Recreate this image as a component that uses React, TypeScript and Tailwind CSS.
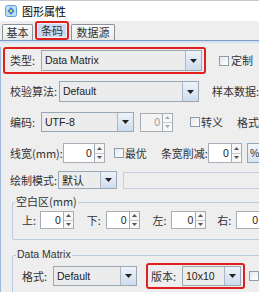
import React from "react";

const CJK = "font-['Noto_Sans_CJK_SC','Noto_Sans',sans-serif]";

function Arrow() {
  return (
    <div className="flex h-full w-[16px] items-center justify-center border-l border-[#a9b8c8] bg-gradient-to-b from-[#eef3f9] to-[#cddcec]">
      <svg width="7" height="4" viewBox="0 0 7 4">
        <path d="M0 0h7L3.5 4z" fill="#222" />
      </svg>
    </div>
  );
}

function Combo({ w, h = 20, text, latin = true }: { w: number; h?: number; text: string; latin?: boolean }) {
  return (
    <div
      className="flex shrink-0 items-stretch border border-[#9aa7b5] bg-[#ececec]"
      style={{ width: w, height: h }}
    >
      <div
        className={`flex flex-1 items-center pl-[3px] text-[#222] ${latin ? "font-['Liberation_Sans',sans-serif] text-[10.5px]" : CJK + " text-[11px]"}`}
      >
        {text}
      </div>
      <Arrow />
    </div>
  );
}

function Spinner({ fw, h = 18, disabled = false, value = "0" }: { fw: number; h?: number; disabled?: boolean; value?: string }) {
  return (
    <div className="flex shrink-0 items-stretch" style={{ height: h }}>
      <div
        className={`flex items-center justify-end border border-[#a5adb6] pr-[2px] font-['Liberation_Sans',sans-serif] text-[10.5px] ${disabled ? "bg-[#f3f3f3] text-[#9a9a9a]" : "bg-white text-[#222]"}`}
        style={{ width: fw }}
      >
        {value}
      </div>
      <div className="flex w-[10px] flex-col border border-l-0 border-[#a5adb6] bg-[#f7f7f7]">
        <div className="flex flex-1 items-center justify-center border-b border-[#c4c9cf]">
          <svg width="5" height="3" viewBox="0 0 5 3">
            <path d="M2.5 0L5 3H0z" fill={disabled ? "#aaa" : "#555"} />
          </svg>
        </div>
        <div className="flex flex-1 items-center justify-center">
          <svg width="5" height="3" viewBox="0 0 5 3">
            <path d="M0 0h5L2.5 3z" fill={disabled ? "#aaa" : "#555"} />
          </svg>
        </div>
      </div>
    </div>
  );
}

function Check() {
  return <div className="h-[10px] w-[10px] shrink-0 border border-[#8e9caa] bg-gradient-to-br from-[#e4e9ee] to-white" />;
}

export default function App() {
  return (
    <div className={`h-[292px] w-[259px] overflow-hidden whitespace-nowrap bg-[#eeeeee] text-[11px] leading-none text-[#333] ${CJK}`}>
      {/* title bar */}
      <div className="flex h-[21px] items-center gap-[5px] border-t border-[#c8c8c8] bg-white pl-[5px] text-[11px] text-black">
        <svg width="12" height="12" viewBox="0 0 12 12">
          <rect x="0.5" y="0.5" width="11" height="11" rx="2" fill="#bfe0f7" stroke="#5b9bd5" />
          <path d="M6 2l3.5 4L6 10 2.5 6z" fill="#2f7fd1" />
          <circle cx="6" cy="6" r="1.4" fill="#f5d142" />
        </svg>
        <span>图形属性</span>
      </div>

      {/* tabs */}
      <div className="flex h-[19px] items-end bg-[#eeeeee] pl-[2px]">
        <div className="flex h-[16px] w-[31px] items-center justify-center rounded-t-[2px] border border-b-0 border-[#8d9199] bg-gradient-to-b from-[#fbfbfb] to-[#e9e9e9]">
          基本
        </div>
        <div className="ml-[2px] flex h-[19px] w-[34px] items-center justify-center rounded-[3px] border-2 border-[#e21f1f] p-[1px]">
          <div className="flex h-full w-full items-center justify-center bg-[#c7dcf2]">条码</div>
        </div>
        <div className="ml-[2px] flex h-[16px] w-[44px] items-center justify-center rounded-t-[2px] border border-b-0 border-[#8d9199] bg-gradient-to-b from-[#fbfbfb] to-[#e9e9e9]">
          数据源
        </div>
      </div>
      <div className="h-[1px] bg-[#7b9cc6]" />
      <div className="h-[2px] bg-[#d3e1f1]" />

      {/* content */}
      <div className="h-[250px] border-l border-[#9db8d9]">
        {/* row 1 */}
        <div className="mt-[4px] flex h-[27px] items-center">
          <div className="ml-[2px] flex h-[27px] w-[203px] items-center rounded-[3px] border-2 border-[#e21f1f] pl-[5px]">
            <span className="w-[31px]">类型:</span>
            <Combo w={161} h={21} text="Data Matrix" />
          </div>
          <div className="ml-[13px]">
            <Check />
          </div>
          <span className="ml-[2px]">定制</span>
        </div>

        {/* row 2 */}
        <div className="mt-[7px] flex h-[21px] items-center pl-[9px]">
          <span className="w-[51px]">校验算法:</span>
          <Combo w={140} h={21} text="Default" />
          <span className="ml-[13px]">样本数据:</span>
        </div>

        {/* row 3 */}
        <div className="mt-[10px] flex h-[20px] items-center pl-[9px]">
          <span className="w-[32px]">编码:</span>
          <Combo w={93} h={20} text="UTF-8" />
          <div className="ml-[6px]">
            <Spinner fw={23} h={19} disabled />
          </div>
          <div className="ml-[17px]">
            <Check />
          </div>
          <span className="ml-[1px]">转义</span>
          <span className="ml-[14px]">格式</span>
        </div>

        {/* row 4 */}
        <div className="mt-[11px] flex h-[20px] items-center pl-[9px]">
          <span className="w-[53px]">线宽(mm):</span>
          <Spinner fw={32} h={20} />
          <div className="ml-[9px]">
            <Check />
          </div>
          <span className="ml-[1px]">最优</span>
          <span className="ml-[14px] w-[50px]">条宽削减:</span>
          <Spinner fw={24} h={20} />
          <div className="ml-[5px] flex h-[20px] w-[20px] shrink-0 items-center border border-[#8fa6bf] bg-gradient-to-b from-[#f2f6fb] to-[#d6e3f0] pl-[2px] font-['Liberation_Sans',sans-serif] text-[10.5px]">
            %
          </div>
        </div>

        {/* row 5 */}
        <div className="mt-[8px] flex h-[18px] items-center pl-[9px]">
          <span className="w-[48px] shrink-0">绘制模式:</span>
          <Combo w={59} h={18} text="默认" latin={false} />
          <div className="ml-[6px] h-[17px] w-[150px] shrink-0 border border-[#c5d0dc] bg-[#eeeeee]" />
        </div>

        {/* blank area group */}
        <div className="relative ml-[11px] mt-[13px] h-[38px] w-[260px] rounded-[2px] border border-[#b9cbe0]">
          <span className="absolute left-[2px] top-[-7px] bg-[#eeeeee] px-[1px]">空白区(mm)</span>
          <div className="mt-[8px] flex h-[18px] items-center pl-[9px]">
            <span className="w-[21px]">上:</span>
            <Spinner fw={24} />
            <span className="ml-[13px] w-[22px]">下:</span>
            <Spinner fw={24} />
            <span className="ml-[13px] w-[22px]">左:</span>
            <Spinner fw={25} />
            <span className="ml-[11px] w-[22px]">右:</span>
            <Spinner fw={25} />
          </div>
        </div>

        {/* data matrix group */}
        <div className="relative ml-[11px] mt-[15px] h-[60px] w-[260px] rounded-[2px] border border-[#b9cbe0]">
          <span className="absolute left-[3px] top-[-7px] bg-[#eeeeee] px-[1px] font-['Liberation_Sans',sans-serif] text-[10.5px]">
            Data Matrix
          </span>
          <div className="mt-[7px] flex h-[26px] items-center pl-[9px]">
            <span className="w-[31px]">格式:</span>
            <Combo w={84} h={20} text="Default" />
            <div className="ml-[9px] flex h-[26px] w-[99px] shrink-0 items-center rounded-[3px] border-2 border-[#e21f1f] pl-[3px]">
              <span className="w-[31px]">版本:</span>
              <Combo w={59} h={20} text="10x10" />
            </div>
            <div className="ml-[4px]">
              <Check />
            </div>
          </div>
        </div>
      </div>
    </div>
  );
}
